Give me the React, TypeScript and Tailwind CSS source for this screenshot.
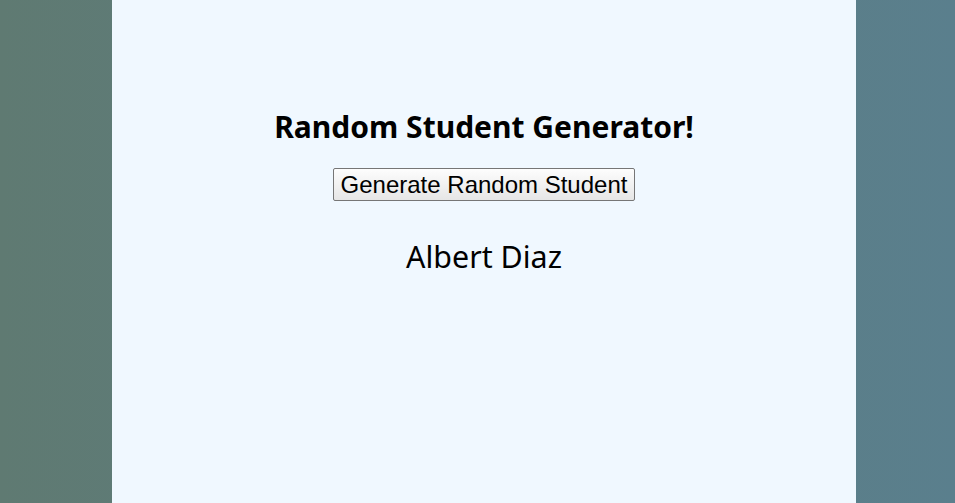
export default function App() {
  return (
    <div className="h-[503px] w-full bg-gradient-to-r from-[#5f7a72] to-[#5a7f8d] flex">
      <div className="ml-[112px] w-[744px] h-full bg-[#f0f8ff] flex flex-col items-center pt-[106px]">
        <h1 className="text-[30px] leading-[42px] font-bold text-black font-['Noto_Sans','Open_Sans',sans-serif]">
          Random Student Generator!
        </h1>
        <button className="mt-[20px] h-[33px] px-[7px] border border-[#767676] rounded-[2px] bg-gradient-to-b from-[#fdfdfd] to-[#e6e6e6] text-[24px] leading-none text-black font-['Liberation_Sans',Arial,sans-serif]">
          Generate Random Student
        </button>
        <div className="mt-[35px] text-[30.4px] leading-[42px] text-black font-['Noto_Sans','Open_Sans',sans-serif]">
          Albert Diaz
        </div>
      </div>
    </div>
  );
}
